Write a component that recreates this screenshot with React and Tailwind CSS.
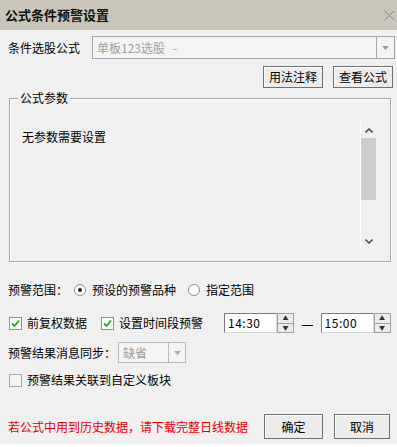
const font = { fontFamily: '"Noto Sans CJK SC", "Liberation Sans", sans-serif' };

function Button({ children, className = "" }) {
  return (
    <div
      className={`flex items-center justify-center border border-[#707070] bg-[#ececec] text-[12px] text-black shadow-[inset_1px_1px_0_#fff] ${className}`}
    >
      {children}
    </div>
  );
}

function Check({ checked, label, className = "" }) {
  return (
    <div className={`flex shrink-0 items-center gap-[5px] whitespace-nowrap ${className}`}>
      <div className="flex h-[13px] w-[13px] items-center justify-center border border-[#8e8f8f] bg-white">
        {checked && (
          <svg width="9" height="9" viewBox="0 0 9 9">
            <path d="M1 4.5 L3.5 7 L8 1.5" fill="none" stroke="#21a121" strokeWidth="1.8" />
          </svg>
        )}
      </div>
      <span>{label}</span>
    </div>
  );
}

function Radio({ checked, label, className = "" }) {
  return (
    <div className={`flex shrink-0 items-center gap-[6px] whitespace-nowrap ${className}`}>
      <div className="flex h-[12px] w-[12px] items-center justify-center rounded-full border border-[#8e8f8f] bg-white">
        {checked && <div className="h-[4px] w-[4px] rounded-full bg-[#222]" />}
      </div>
      <span>{label}</span>
    </div>
  );
}

function Spinner({ value }) {
  return (
    <div className="flex h-[20px] w-[70px] shrink-0 items-stretch">
      <div className="flex flex-1 items-center border border-[#7a7a7a] border-r-[#d8d8d8] border-b-[#d8d8d8] bg-white pl-[3px] text-[12px] tracking-[0.5px]">
        {value}
      </div>
      <div className="flex w-[17px] flex-col">
        <div className="flex flex-1 items-center justify-center border border-[#a0a0a0] bg-[#ececec] text-[6px] leading-none text-[#333]">▲</div>
        <div className="flex flex-1 items-center justify-center border border-t-0 border-[#a0a0a0] bg-[#ececec] text-[6px] leading-none text-[#333]">▼</div>
      </div>
    </div>
  );
}

export default function App() {
  return (
    <div className="flex h-[447px] w-[397px] flex-col whitespace-nowrap bg-[#f0f0f0] text-[12px] text-black" style={font}>
      <div className="flex h-[30px] shrink-0 items-center justify-between bg-[#c9c5b9] pl-[5px] pr-[2px]">
        <span className="text-[13px] font-bold text-[#111]">公式条件预警设置</span>
        <svg width="11" height="11" viewBox="0 0 11 11">
          <path d="M0.5 0.5 L10.5 10.5 M10.5 0.5 L0.5 10.5" stroke="#8a8780" strokeWidth="1" />
        </svg>
      </div>

      <div className="flex flex-1 flex-col px-[8px] pt-[6px]">
        <div className="flex h-[23px] items-center">
          <span className="w-[84px]">条件选股公式</span>
          <div className="mr-[-6px] flex h-[23px] flex-1 items-stretch border border-[#a5a5a5] bg-[#f4f4f4]">
            <span className="flex flex-1 items-center pl-[4px] text-[#a0a0a0]">单板123选股&nbsp;&nbsp;&nbsp;-</span>
            <div className="flex w-[18px] items-center justify-center border-l border-[#a5a5a5]">
              <svg width="7" height="4" viewBox="0 0 7 4">
                <path d="M0 0 H7 L3.5 4 Z" fill="#9a9a9a" />
              </svg>
            </div>
          </div>
        </div>

        <div className="mr-[-4px] mt-[7px] flex justify-end gap-[10px]">
          <Button className="h-[22px] w-[60px]">用法注释</Button>
          <Button className="h-[22px] w-[60px]">查看公式</Button>
        </div>

        <div className="relative ml-[1px] mr-[-2px] mt-[10px] h-[164px] border border-[#a8a8a8] shadow-[inset_1px_1px_0_#fff,1px_1px_0_#fff]">
          <span className="absolute left-[8px] top-[-9px] bg-[#f0f0f0] px-[2px] leading-[16px]">公式参数</span>
          <div className="flex h-full">
            <div className="flex-1 pl-[12px] pt-[29px]">无参数需要设置</div>
            <div className="mb-[12px] mr-[14px] mt-[23px] flex w-[16px] flex-col border-l border-white">
              <div className="flex h-[16px] items-center justify-center">
                <svg width="8" height="5" viewBox="0 0 8 5">
                  <path d="M0.5 4.5 L4 1 L7.5 4.5" fill="none" stroke="#555" strokeWidth="1.6" />
                </svg>
              </div>
              <div className="h-[62px] bg-[#cdcdcd]" />
              <div className="flex-1" />
              <div className="flex h-[16px] items-center justify-center">
                <svg width="8" height="5" viewBox="0 0 8 5">
                  <path d="M0.5 0.5 L4 4 L7.5 0.5" fill="none" stroke="#555" strokeWidth="1.6" />
                </svg>
              </div>
            </div>
          </div>
        </div>

        <div className="mt-[20px] flex h-[16px] items-center">
          <span className="w-[66px]">预警范围：</span>
          <Radio checked label="预设的预警品种" />
          <Radio label="指定范围" className="ml-[12px]" />
        </div>

        <div className="mt-[15px] flex h-[20px] items-center">
          <Check checked label="前复权数据" className="ml-[1px]" />
          <Check checked label="设置时间段预警" className="ml-[14px]" />
          <div className="ml-[21px]">
            <Spinner value="14:30" />
          </div>
          <span className="mx-[7px] text-[14px] leading-none">—</span>
          <Spinner value="15:00" />
        </div>

        <div className="mt-[9px] flex h-[21px] items-center">
          <span className="w-[110px]">预警结果消息同步：</span>
          <div className="flex h-[21px] w-[68px] items-stretch border border-[#b8b8b8] bg-[#f4f4f4]">
            <span className="flex flex-1 items-center pl-[4px] text-[#9a9a9a]">缺省</span>
            <div className="flex w-[17px] items-center justify-center border-l border-[#b8b8b8]">
              <svg width="7" height="4" viewBox="0 0 7 4">
                <path d="M0 0 H7 L3.5 4 Z" fill="#aaa" />
              </svg>
            </div>
          </div>
        </div>

        <div className="mt-[9px] flex h-[16px] items-center">
          <div className="ml-[1px] flex items-center gap-[5px]">
            <div className="h-[13px] w-[13px] border border-[#a8a8a8] bg-[#f4f4f4]" />
            <span>预警结果关联到自定义板块</span>
          </div>
        </div>

        <div className="mb-[5px] mt-auto flex items-center justify-between">
          <span className="text-[#e00000]">若公式中用到历史数据，请下载完整日线数据</span>
          <div className="mr-[-1px] flex gap-[11px]">
            <Button className="h-[25px] w-[59px]">确定</Button>
            <Button className="h-[25px] w-[56px]">取消</Button>
          </div>
        </div>
      </div>
      <div className="h-[3px] shrink-0 bg-white" />
    </div>
  );
}
